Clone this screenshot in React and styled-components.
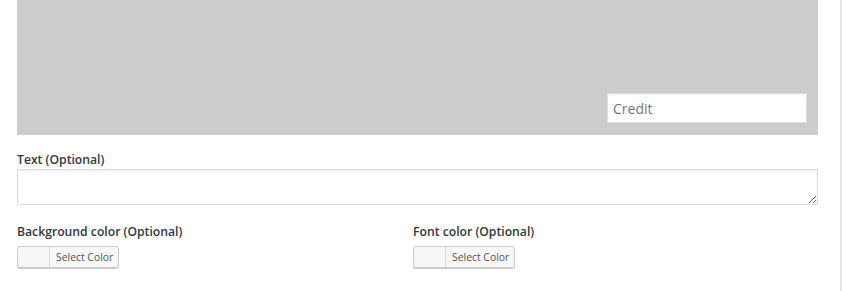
import React from 'react';
import styled, { createGlobalStyle } from 'styled-components';

const GlobalStyle = createGlobalStyle`
  html, body {
    margin: 0;
    padding: 0;
    background: #fff;
  }
  body {
    font-family: "Open Sans", "Noto Sans", "Liberation Sans", sans-serif;
    color: #23282d;
  }
`;

const Page = styled.div`
  width: 840px;
  height: 291px;
  border-right: 2px solid #e5e5e5;
  overflow: hidden;
`;

const Panel = styled.div`
  width: 801px;
  margin-left: 17px;
`;

const Hero = styled.div`
  position: relative;
  height: 135px;
  background: #cccccc;
`;

const CreditInput = styled.input`
  position: absolute;
  right: 11px;
  bottom: 12px;
  width: 200px;
  height: 30px;
  box-sizing: border-box;
  border: 1px solid #ddd;
  box-shadow: inset 0 1px 2px rgba(0, 0, 0, 0.07);
  background: #fff;
  padding: 0 5px;
  font-family: inherit;
  font-size: 14px;
  color: #32373c;
  outline: none;
  &::placeholder {
    color: #72777c;
  }
`;

const Field = styled.div`
  margin-top: ${p => p.top || 0}px;
`;

const Label = styled.label`
  display: block;
  font-size: 12.2px;
  font-weight: 600;
  line-height: 16px;
  margin-bottom: ${p => p.gap ?? 1}px;
  color: #32373c;
`;

const TextArea = styled.textarea`
  display: block;
  width: 100%;
  height: 36px;
  box-sizing: border-box;
  border: 1px solid #ddd;
  box-shadow: inset 0 1px 2px rgba(0, 0, 0, 0.07);
  padding: 2px 6px;
  font-family: inherit;
  font-size: 14px;
  resize: vertical;
  outline: none;
`;

const ColorRow = styled.div`
  display: grid;
  grid-template-columns: 396px 1fr;
  margin-top: 19px;
`;

const ColorButton = styled.button`
  display: inline-flex;
  align-items: stretch;
  height: 20px;
  padding: 0 0 0 31px;
  margin: 0;
  border: 1px solid #ccc;
  border-radius: 3px;
  background: #f7f7f7;
  box-shadow: 0 1px 0 #ccc;
  cursor: pointer;
  box-sizing: content-box;
`;

const ButtonText = styled.span`
  display: flex;
  align-items: center;
  padding: 0 5px 0 6px;
  border-left: 1px solid #ddd;
  border-radius: 0 2px 2px 0;
  background: #f7f7f7;
  font-family: "Open Sans", "Noto Sans", sans-serif;
  font-size: 10.4px;
  color: #555;
`;

function ColorPicker({ label }) {
  return (
    <div>
      <Label gap={4}>{label}</Label>
      <ColorButton type="button">
        <ButtonText>Select Color</ButtonText>
      </ColorButton>
    </div>
  );
}

export default function App() {
  return (
    <>
      <GlobalStyle />
      <Page>
        <Panel>
          <Hero>
            <CreditInput placeholder="Credit" />
          </Hero>
          <Field top={17}>
            <Label>Text (Optional)</Label>
            <TextArea />
          </Field>
          <ColorRow>
            <ColorPicker label="Background color (Optional)" />
            <ColorPicker label="Font color (Optional)" />
          </ColorRow>
        </Panel>
      </Page>
    </>
  );
}
